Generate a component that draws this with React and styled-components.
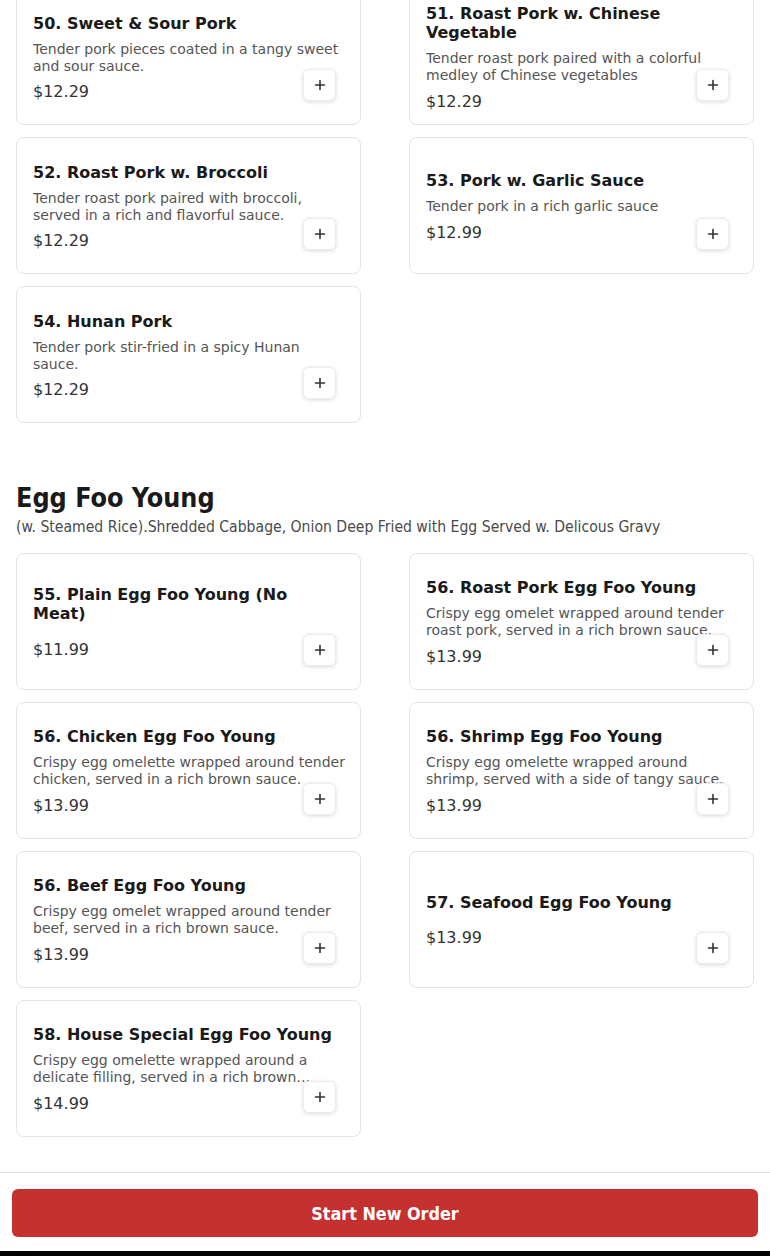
import React from "react";
import styled, { createGlobalStyle } from "styled-components";

const GlobalStyle = createGlobalStyle`
  html, body { margin: 0; padding: 0; background: #ffffff; }
  body { font-family: "DejaVu Sans", "Liberation Sans", sans-serif; color: #1a1a1a; }
  * { box-sizing: border-box; }
`;

const Screen = styled.div`
  height: 1256px;
  display: flex;
  flex-direction: column;
  overflow: hidden;
  background: #fff;
`;

const Scroller = styled.main`
  flex: 1;
  overflow: hidden;
`;

const Content = styled.div`
  padding: 0 16px;
  margin-top: -12px;
`;

const Section = styled.section`
  margin-top: ${(p) => (p.$first ? "0" : "60px")};
`;

const SectionTitle = styled.h2`
  margin: 0 0 4px;
  font-family: "DejaVu Sans Condensed", "DejaVu Sans", sans-serif;
  font-weight: 700;
  font-size: 26.7px;
  line-height: 30px;
  color: #1a1a1a;
`;

const SectionNote = styled.p`
  margin: 0 0 15.5px;
  font-family: "DejaVu Sans Condensed", "DejaVu Sans", sans-serif;
  font-size: 15.6px;
  line-height: 20px;
  color: #4a4a4a;
`;

const Grid = styled.div`
  display: grid;
  grid-template-columns: 1fr 1fr;
  column-gap: 48px;
  row-gap: 12px;
`;

const Card = styled.article`
  position: relative;
  height: 137px;
  border: 1px solid #e4e4e4;
  border-radius: 8px;
  background: #fff;
  padding: 13px 16px 11px;
  display: flex;
  flex-direction: column;
  justify-content: center;
`;

const ItemName = styled.h3`
  margin: 0 0 8px;
  font-size: 16px;
  line-height: 19.2px;
  font-weight: 700;
  color: #1a1a1a;
`;

const ItemDesc = styled.p`
  margin: 0 -2px 8px 0;
  font-size: 14px;
  line-height: 16.8px;
  color: #555;
  display: -webkit-box;
  -webkit-line-clamp: 2;
  -webkit-box-orient: vertical;
  overflow: hidden;
`;

const Spacer = styled.div`
  height: 8px;
`;

const Price = styled.span`
  font-size: 16px;
  line-height: 19.2px;
  color: #333;
`;

const AddButton = styled.button`
  position: absolute;
  right: 24px;
  bottom: 23px;
  width: 33px;
  height: 32px;
  padding: 0;
  border: 1px solid #ececec;
  border-radius: 6px;
  background: #fff;
  box-shadow: 0 1px 4px rgba(0, 0, 0, 0.14);
  display: flex;
  align-items: center;
  justify-content: center;
  cursor: pointer;
`;

const Footer = styled.footer`
  border-top: 1px solid #e2e2e2;
  background: #fff;
  padding: 16px 12px 14px;
`;

const OrderButton = styled.button`
  width: 100%;
  height: 48px;
  border: none;
  border-radius: 6px;
  background: #c53030;
  color: #fff;
  font-family: "DejaVu Sans Condensed", "DejaVu Sans", sans-serif;
  font-weight: 700;
  font-size: 17.8px;
  cursor: pointer;
`;

const BottomEdge = styled.div`
  height: 5px;
  background: #000;
`;

const PlusIcon = () => (
  <svg width="12" height="12" viewBox="0 0 12 12" aria-hidden="true">
    <path d="M6 1.5v9M1.5 6h9" stroke="#333" strokeWidth="1.6" strokeLinecap="round" fill="none" />
  </svg>
);

const porkItems = [
  { name: "50. Sweet & Sour Pork", desc: "Tender pork pieces coated in a tangy sweet and sour sauce.", price: "$12.29" },
  { name: "51. Roast Pork w. Chinese Vegetable", desc: "Tender roast pork paired with a colorful medley of Chinese vegetables", price: "$12.29" },
  { name: "52. Roast Pork w. Broccoli", desc: "Tender roast pork paired with broccoli, served in a rich and flavorful sauce.", price: "$12.29" },
  { name: "53. Pork w. Garlic Sauce", desc: "Tender pork in a rich garlic sauce", price: "$12.99" },
  { name: "54. Hunan Pork", desc: "Tender pork stir-fried in a spicy Hunan sauce.", price: "$12.29" },
];

const eggItems = [
  { name: "55. Plain Egg Foo Young (No Meat)", desc: "", price: "$11.99" },
  { name: "56. Roast Pork Egg Foo Young", desc: "Crispy egg omelet wrapped around tender roast pork, served in a rich brown sauce.", price: "$13.99" },
  { name: "56. Chicken Egg Foo Young", desc: "Crispy egg omelette wrapped around tender chicken, served in a rich brown sauce.", price: "$13.99" },
  { name: "56. Shrimp Egg Foo Young", desc: "Crispy egg omelette wrapped around shrimp, served with a side of tangy sauce.", price: "$13.99" },
  { name: "56. Beef Egg Foo Young", desc: "Crispy egg omelet wrapped around tender beef, served in a rich brown sauce.", price: "$13.99" },
  { name: "57. Seafood Egg Foo Young", desc: "", price: "$13.99" },
  { name: "58. House Special Egg Foo Young", desc: "Crispy egg omelette wrapped around a delicate filling, served in a rich brown sauce.", price: "$14.99" },
];

const MenuCard = ({ item }) => (
  <Card>
    <ItemName>{item.name}</ItemName>
    {item.desc ? <ItemDesc>{item.desc}</ItemDesc> : <Spacer />}
    <Price>{item.price}</Price>
    <AddButton aria-label={`Add ${item.name}`}>
      <PlusIcon />
    </AddButton>
  </Card>
);

export default function App() {
  return (
    <>
      <GlobalStyle />
      <Screen>
        <Scroller>
          <Content>
            <Section $first>
              <Grid>
                {porkItems.map((it) => (
                  <MenuCard key={it.name} item={it} />
                ))}
              </Grid>
            </Section>
            <Section>
              <SectionTitle>Egg Foo Young</SectionTitle>
              <SectionNote>
                (w. Steamed Rice).Shredded Cabbage, Onion Deep Fried with Egg Served w. Delicous Gravy
              </SectionNote>
              <Grid>
                {eggItems.map((it) => (
                  <MenuCard key={it.name} item={it} />
                ))}
              </Grid>
            </Section>
          </Content>
        </Scroller>
        <Footer>
          <OrderButton>Start New Order</OrderButton>
        </Footer>
        <BottomEdge />
      </Screen>
    </>
  );
}
